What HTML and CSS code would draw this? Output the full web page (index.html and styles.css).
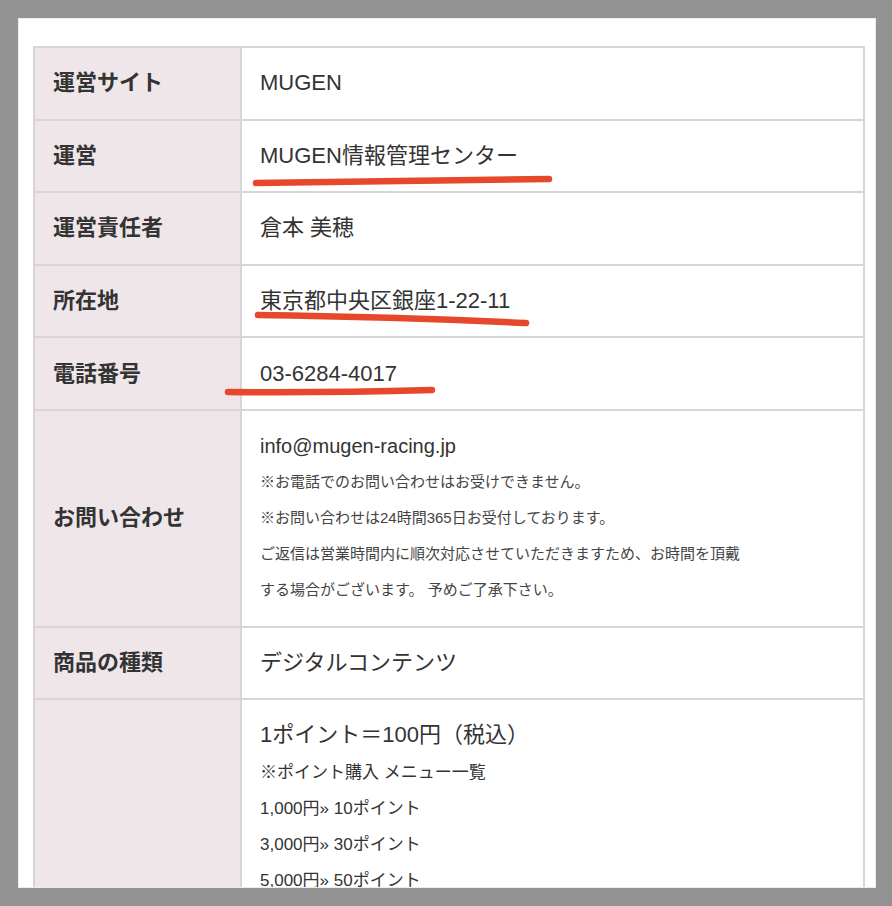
FILE: index.html
```html
<!DOCTYPE html>
<html lang="ja">
<head>
    <meta charset="UTF-8" />
    <title>特定商取引法に基づく表記</title>
    <link rel="stylesheet" href="styles.css">
</head>
<body>
    <div class="page">
        <table class="info-table">
            <colgroup>
                <col class="col-label">
                <col>
            </colgroup>
            <tr>
                <th>運営サイト</th>
                <td>MUGEN</td>
            </tr>
            <tr>
                <th>運営</th>
                <td class="marked">MUGEN情報管理センター
                    <svg class="mark mark-1" width="304" height="16" viewBox="0 0 304 16"><path d="M4 10 Q150 8 297 6" /></svg>
                </td>
            </tr>
            <tr>
                <th>運営責任者</th>
                <td>倉本 美穂</td>
            </tr>
            <tr>
                <th>所在地</th>
                <td class="marked">東京都中央区銀座1-22-11
                    <svg class="mark mark-2" width="284" height="20" viewBox="0 0 284 20"><path d="M6 7 Q150 9 274 15" /></svg>
                </td>
            </tr>
            <tr>
                <th>電話番号</th>
                <td class="marked">03-6284-4017
                    <svg class="mark mark-3" width="220" height="14" viewBox="0 0 220 14"><path d="M6 8 Q100 9 210 6" /></svg>
                </td>
            </tr>
            <tr>
                <th>お問い合わせ</th>
                <td>
                    <div class="mail">info@mugen-racing.jp</div>
                    <div class="note">※お電話でのお問い合わせはお受けできません。</div>
                    <div class="note">※お問い合わせは24時間365日お受付しております。</div>
                    <div class="note">ご返信は営業時間内に順次対応させていただきますため、お時間を頂戴<br>する場合がございます。 予めご了承下さい。</div>
                </td>
            </tr>
            <tr>
                <th>商品の種類</th>
                <td>デジタルコンテンツ</td>
            </tr>
            <tr>
                <th></th>
                <td class="points">
                    <div>1ポイント＝100円（税込）</div>
                    <div class="menu first">※ポイント購入 メニュー一覧</div>
                    <div class="menu">1,000円» 10ポイント</div>
                    <div class="menu">3,000円» 30ポイント</div>
                    <div class="menu">5,000円» 50ポイント</div>
                </td>
            </tr>
        </table>
    </div>
</body>
</html>
```

FILE: styles.css
```css
html, body {
    margin: 0;
    height: 100%;
}
body {
    background-color: #939393;
    padding: 18px 16px 18px 18px;
    box-sizing: border-box;
    font-family: "Liberation Sans", "Noto Sans CJK JP", sans-serif;
    color: #333;
}
.page {
    background-color: #fff;
    height: 870px;
    overflow: hidden;
    padding: 28px 9px 0 15px;
    box-sizing: border-box;
    border: 1px solid #ececec;
}
.info-table {
    width: 100%;
    border-collapse: collapse;
    table-layout: fixed;
    margin-top: -1px;
    margin-left: -1px;
}
.col-label {
    width: 207px;
}
.info-table th,
.info-table td {
    border: 2px solid #d6d6d6;
    padding: 17.3px 18px;
    font-size: 22px;
    line-height: 36px;
    text-align: left;
    vertical-align: middle;
}
.info-table th {
    background-color: #efe6e9;
    font-weight: bold;
    color: #333;
}
.info-table td {
    color: #333;
}
.info-table td.points {
    vertical-align: top;
}
.mail {
    font-size: 20px;
}
.note {
    font-size: 15px;
    line-height: 36px;
    color: #444;
}
.menu {
    font-size: 17px;
    line-height: 36px;
}
.menu.first {
    margin-top: 2px;
}
.marked {
    position: relative;
}
.mark {
    position: absolute;
    overflow: visible;
}
.mark path {
    fill: none;
    stroke: #e5482a;
    stroke-width: 6.5;
    stroke-linecap: round;
}
.mark-1 {
    left: 10px;
    top: 52px;
}
.mark-2 {
    left: 10px;
    top: 42px;
}
.mark-3 {
    left: -20px;
    top: 46px;
}
```
